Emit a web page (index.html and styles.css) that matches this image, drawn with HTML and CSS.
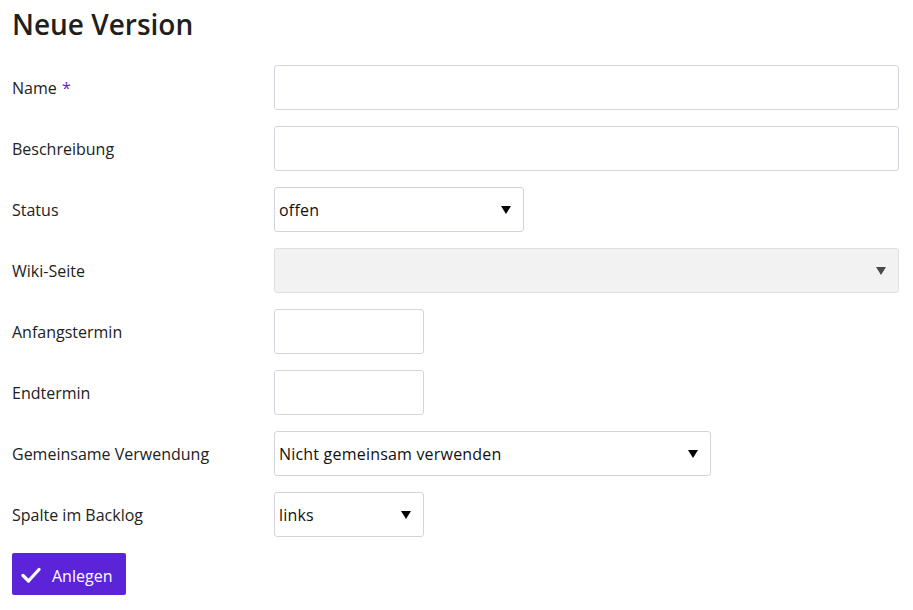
FILE: index.html
```html
<!DOCTYPE html>
<html lang="de">
<head>
<meta charset="utf-8">
<link rel="stylesheet" href="styles.css">
</head>
<body>
<h1 class="title">Neue Version</h1>
<form class="form">
  <div class="row"><label class="label">Name <span class="req">*</span></label><div class="input full"></div></div>
  <div class="row"><label class="label">Beschreibung</label><div class="input full"></div></div>
  <div class="row"><label class="label">Status</label><div class="select w250"><span>offen</span><span class="arrow"></span></div></div>
  <div class="row"><label class="label">Wiki-Seite</label><div class="select full disabled"><span></span><span class="arrow"></span></div></div>
  <div class="row"><label class="label">Anfangstermin</label><div class="input w150"></div></div>
  <div class="row"><label class="label">Endtermin</label><div class="input w150"></div></div>
  <div class="row"><label class="label">Gemeinsame Verwendung</label><div class="select w437"><span>Nicht gemeinsam verwenden</span><span class="arrow"></span></div></div>
  <div class="row"><label class="label">Spalte im Backlog</label><div class="select w150"><span>links</span><span class="arrow"></span></div></div>
  <div class="actions">
    <button type="button" class="btn">
      <svg width="20" height="16" viewBox="0 0 20 16"><path d="M2 8.5 L7.5 14 L18 2.5" fill="none" stroke="#fff" stroke-width="3.2" stroke-linecap="round" stroke-linejoin="round"/></svg>
      <span class="btn-text">Anlegen</span>
    </button>
  </div>
</form>
</body>
</html>
```
FILE: styles.css
```css
* { box-sizing: border-box; }
body {
  margin: 0;
  padding: 0 12px;
  font-family: "Open Sans", "Noto Sans", sans-serif;
  color: #222;
  background: #fff;
}
.title {
  margin: 0;
  padding-top: 4px;
  height: 65px;
  font-size: 28px;
  font-weight: 600;
  color: #1f1f1f;
  line-height: 40px;
}
.form {
  display: flex;
  flex-direction: column;
  gap: 16px;
}
.row {
  display: grid;
  grid-template-columns: 262px 1fr;
  align-items: center;
  height: 45px;
}
.label {
  font-size: 16px;
  color: #222;
}
.req { color: #5c24d9; margin-left: 1px; }
.input, .select {
  height: 45px;
  border: 1px solid #d2d6dc;
  border-radius: 3px;
  background: #fff;
}
.full { width: 625px; }
.w250 { width: 250px; }
.w150 { width: 150px; }
.w437 { width: 437px; }
.select {
  display: flex;
  align-items: center;
  justify-content: space-between;
  padding: 0 12px 0 4px;
  font-size: 16px;
  letter-spacing: 0.2px;
  color: #111;
}
.select.disabled { background: #f2f2f2; border-color: #dcdfe3; }
.arrow {
  width: 0;
  height: 0;
  border-left: 5.5px solid transparent;
  border-right: 5.5px solid transparent;
  border-top: 8px solid #000;
}
.disabled .arrow { border-top-color: #4a4a4a; }
.actions { display: flex; }
.btn {
  display: flex;
  align-items: center;
  gap: 11px;
  height: 42px;
  width: 114px;
  padding: 1px 0 0 9px;
  border: none;
  border-radius: 2px;
  background: #5c24d9;
  color: #fff;
  font-family: inherit;
  font-size: 16px;
  cursor: pointer;
}
.btn-text { padding-top: 2px; }
```
